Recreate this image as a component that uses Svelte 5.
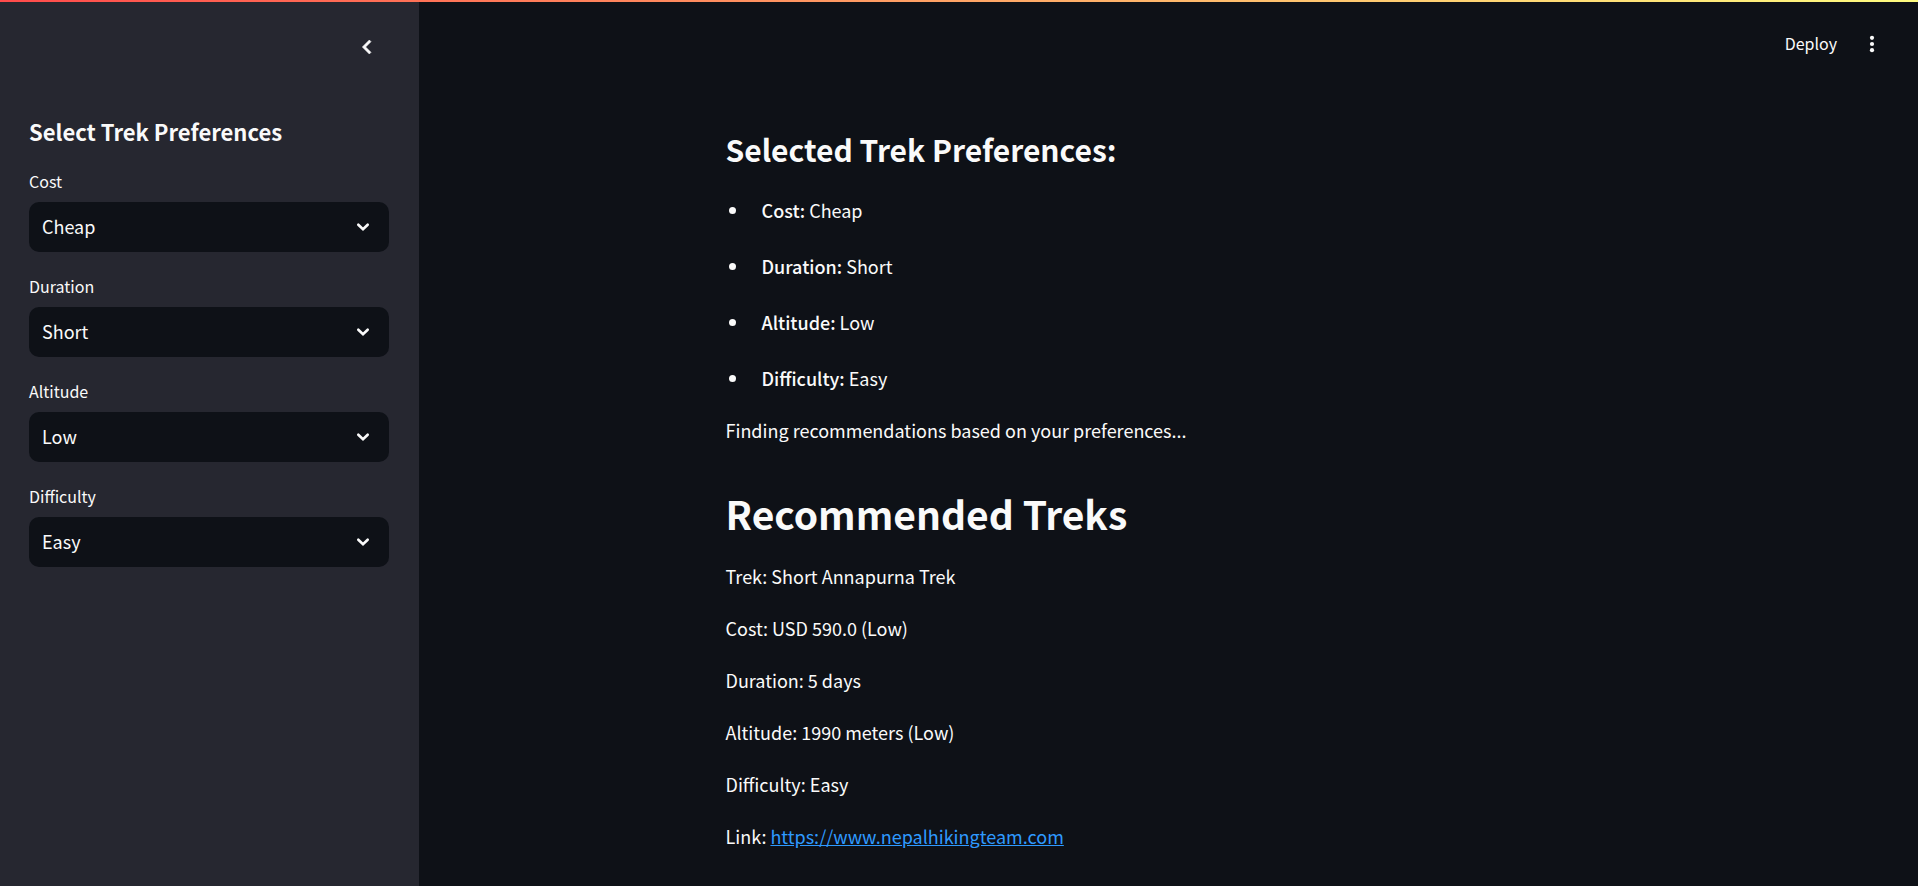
<script>
  const filters = $state([
    { id: 'cost', label: 'Cost', value: 'Cheap', options: ['Cheap', 'Moderate', 'Expensive'] },
    { id: 'duration', label: 'Duration', value: 'Short', options: ['Short', 'Medium', 'Long'] },
    { id: 'altitude', label: 'Altitude', value: 'Low', options: ['Low', 'Medium', 'High'] },
    { id: 'difficulty', label: 'Difficulty', value: 'Easy', options: ['Easy', 'Moderate', 'Hard'] }
  ]);
  const details = [
    'Trek: Short Annapurna Trek',
    'Cost: USD 590.0 (Low)',
    'Duration: 5 days',
    'Altitude: 1990 meters (Low)',
    'Difficulty: Easy'
  ];
</script>

<div class="app">
  <div class="decoration"></div>
  <aside>
    <div class="collapse-row">
      <button class="icon" aria-label="Collapse sidebar">
        <svg width="28" height="28" viewBox="0 0 24 24" fill="currentColor" stroke="currentColor" stroke-width="0.5"><path d="M15.41 7.41 14 6l-6 6 6 6 1.41-1.41L10.83 12z" /></svg>
      </button>
    </div>
    <h3>Select Trek Preferences</h3>
    {#each filters as f (f.id)}
      <div class="field">
        <label for={f.id}>{f.label}</label>
        <div class="select">
          <select id={f.id} bind:value={f.value}>
            {#each f.options as o}<option>{o}</option>{/each}
          </select>
          <svg width="24" height="24" viewBox="0 0 24 24" fill="none" stroke="currentColor" stroke-width="2.6" stroke-linecap="round"><path d="M7.3 9.7 12 14.3l4.7-4.6" /></svg>
        </div>
      </div>
    {/each}
  </aside>
  <div class="content">
    <header>
      <button class="deploy">Deploy</button>
      <button class="icon" aria-label="Menu">
        <svg width="24" height="24" viewBox="0 0 24 24" fill="currentColor"><circle cx="12" cy="5.8" r="2.1" /><circle cx="12" cy="12" r="2.1" /><circle cx="12" cy="18.2" r="2.1" /></svg>
      </button>
    </header>
    <main>
      <h2>Selected Trek Preferences:</h2>
      <ul>
        {#each filters as f (f.id)}
          <li><strong>{f.label}:</strong> {f.value}</li>
        {/each}
      </ul>
      <p>Finding recommendations based on your preferences...</p>
      <h1>Recommended Treks</h1>
      {#each details as d}<p>{d}</p>{/each}
      <p>Link: <a href="https://www.nepalhikingteam.com">https://www.nepalhikingteam.com</a></p>
    </main>
  </div>
</div>

<style>
  :global(body) { background: #0e1117; }
  .app {
    display: flex;
    min-height: 100vh;
    color: #fafafa;
    background: #0e1117;
    font: 18px/32px "Noto Sans CJK SC", sans-serif;
  }
  .decoration {
    position: absolute;
    top: 0;
    left: 0;
    right: 0;
    height: 2px;
    background: linear-gradient(90deg, #ff4b4b, #fffd80);
  }
  aside {
    box-sizing: border-box;
    flex: 0 0 419px;
    padding: 24px 30px 24px 29px;
    background: #262730;
  }
  .collapse-row { display: flex; justify-content: flex-end; padding: 6px 5px 52px 0; }
  button { color: inherit; background: none; border: 0; font: inherit; padding: 0; cursor: pointer; }
  .icon { display: flex; padding: 3px; }
  h1, h2, h3, p, ul { margin: 0; padding: 0; }
  h1, h2, h3 { font-weight: 700; }
  strong { font-weight: 500; }
  h3 { font-size: 22px; line-height: 30px; margin-bottom: 23px; }
  .field { margin-bottom: 22px; }
  label { display: block; font-size: 16px; line-height: 25px; margin-bottom: 8px; }
  .select { display: grid; align-items: center; }
  .select select, .select svg { grid-area: 1 / 1; }
  .select svg { justify-self: end; margin-right: 14px; pointer-events: none; }
  select {
    appearance: none;
    width: 100%;
    height: 50px;
    padding: 0 44px 2px 13px;
    border: 0;
    border-radius: 10px;
    color: inherit;
    background: #0e1117;
    font: inherit;
  }
  .content { flex: 1; min-width: 0; }
  header { display: flex; justify-content: flex-end; align-items: center; gap: 20px; padding: 28px 31px 0 0; font-size: 16px; }
  .deploy { line-height: 30px; padding-bottom: 2px; }
  main { box-sizing: border-box; max-width: 926px; margin: 0 auto; padding: 67px 20px 20px; }
  h2 { font-size: 30px; line-height: 44px; margin-bottom: 23px; }
  ul { list-style: disc; margin-bottom: 20px; }
  li { margin-left: 24px; padding-left: 12px; margin-bottom: 24px; }
  li:last-child { margin-bottom: 0; }
  p { margin-bottom: 20px; }
  h1 { font-size: 39px; line-height: 60px; margin: 37px 0 17px; }
  a { color: #2e9aff; }
</style>
